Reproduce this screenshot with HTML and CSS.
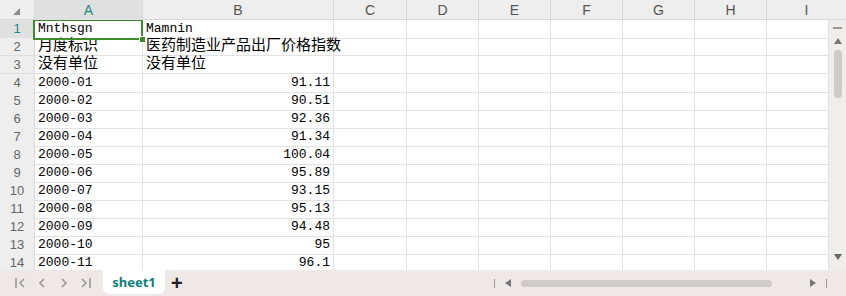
FILE: index.html
```html
<!DOCTYPE html>
<html lang="zh">
<head>
    <meta charset="UTF-8">
    <title>sheet1</title>
    <link rel="stylesheet" href="styles.css">
</head>
<body>
<div class="app">
    <div class="colheads">
        <div class="corner"><span class="corner-tri"></span></div>
        <div class="colhead active">A</div>
        <div class="colhead">B</div>
        <div class="colhead">C</div>
        <div class="colhead">D</div>
        <div class="colhead">E</div>
        <div class="colhead">F</div>
        <div class="colhead">G</div>
        <div class="colhead">H</div>
        <div class="colhead">I</div>
    </div>
    <div class="main">
        <div class="rows">
            <div class="row"><div class="rowhead active">1</div><div class="cell selected">Mnthsgn</div><div class="cell">Mamnin</div><div class="cell"></div><div class="cell"></div><div class="cell"></div><div class="cell"></div><div class="cell"></div><div class="cell"></div><div class="cell"></div></div>
            <div class="row"><div class="rowhead">2</div><div class="cell zh">月度标识</div><div class="cell zh">医药制造业产品出厂价格指数</div><div class="cell"></div><div class="cell"></div><div class="cell"></div><div class="cell"></div><div class="cell"></div><div class="cell"></div><div class="cell"></div></div>
            <div class="row"><div class="rowhead">3</div><div class="cell zh">没有单位</div><div class="cell zh">没有单位</div><div class="cell"></div><div class="cell"></div><div class="cell"></div><div class="cell"></div><div class="cell"></div><div class="cell"></div><div class="cell"></div></div>
            <div class="row"><div class="rowhead">4</div><div class="cell">2000-01</div><div class="cell num">91.11</div><div class="cell"></div><div class="cell"></div><div class="cell"></div><div class="cell"></div><div class="cell"></div><div class="cell"></div><div class="cell"></div></div>
            <div class="row"><div class="rowhead">5</div><div class="cell">2000-02</div><div class="cell num">90.51</div><div class="cell"></div><div class="cell"></div><div class="cell"></div><div class="cell"></div><div class="cell"></div><div class="cell"></div><div class="cell"></div></div>
            <div class="row"><div class="rowhead">6</div><div class="cell">2000-03</div><div class="cell num">92.36</div><div class="cell"></div><div class="cell"></div><div class="cell"></div><div class="cell"></div><div class="cell"></div><div class="cell"></div><div class="cell"></div></div>
            <div class="row"><div class="rowhead">7</div><div class="cell">2000-04</div><div class="cell num">91.34</div><div class="cell"></div><div class="cell"></div><div class="cell"></div><div class="cell"></div><div class="cell"></div><div class="cell"></div><div class="cell"></div></div>
            <div class="row"><div class="rowhead">8</div><div class="cell">2000-05</div><div class="cell num">100.04</div><div class="cell"></div><div class="cell"></div><div class="cell"></div><div class="cell"></div><div class="cell"></div><div class="cell"></div><div class="cell"></div></div>
            <div class="row"><div class="rowhead">9</div><div class="cell">2000-06</div><div class="cell num">95.89</div><div class="cell"></div><div class="cell"></div><div class="cell"></div><div class="cell"></div><div class="cell"></div><div class="cell"></div><div class="cell"></div></div>
            <div class="row"><div class="rowhead">10</div><div class="cell">2000-07</div><div class="cell num">93.15</div><div class="cell"></div><div class="cell"></div><div class="cell"></div><div class="cell"></div><div class="cell"></div><div class="cell"></div><div class="cell"></div></div>
            <div class="row"><div class="rowhead">11</div><div class="cell">2000-08</div><div class="cell num">95.13</div><div class="cell"></div><div class="cell"></div><div class="cell"></div><div class="cell"></div><div class="cell"></div><div class="cell"></div><div class="cell"></div></div>
            <div class="row"><div class="rowhead">12</div><div class="cell">2000-09</div><div class="cell num">94.48</div><div class="cell"></div><div class="cell"></div><div class="cell"></div><div class="cell"></div><div class="cell"></div><div class="cell"></div><div class="cell"></div></div>
            <div class="row"><div class="rowhead">13</div><div class="cell">2000-10</div><div class="cell num">95</div><div class="cell"></div><div class="cell"></div><div class="cell"></div><div class="cell"></div><div class="cell"></div><div class="cell"></div><div class="cell"></div></div>
            <div class="row"><div class="rowhead">14</div><div class="cell">2000-11</div><div class="cell num">96.1</div><div class="cell"></div><div class="cell"></div><div class="cell"></div><div class="cell"></div><div class="cell"></div><div class="cell"></div><div class="cell"></div></div>
        </div>
        <div class="vscroll">
            <div class="vbar-top"></div>
            <svg class="arrow" width="8" height="6" viewBox="0 0 8 6"><path d="M4 0 L8 6 L0 6 Z" fill="#777"/></svg>
            <div class="vthumb"></div>
            <div class="vspace"></div>
            <svg class="arrow" width="8" height="6" viewBox="0 0 8 6"><path d="M0 0 L8 0 L4 6 Z" fill="#666"/></svg>
        </div>
    </div>
    <div class="bottombar">
        <div class="nav">
            <svg width="12" height="12" viewBox="0 0 12 12"><path d="M2 1 V11 M10 2 L6 6 L10 10" stroke="#999" stroke-width="1.6" fill="none"/></svg>
            <svg width="12" height="12" viewBox="0 0 12 12"><path d="M8 2 L4 6 L8 10" stroke="#999" stroke-width="1.6" fill="none"/></svg>
            <svg width="12" height="12" viewBox="0 0 12 12"><path d="M4 2 L8 6 L4 10" stroke="#999" stroke-width="1.6" fill="none"/></svg>
            <svg width="12" height="12" viewBox="0 0 12 12"><path d="M2 2 L6 6 L2 10 M10 1 V11" stroke="#999" stroke-width="1.6" fill="none"/></svg>
        </div>
        <div class="tab">sheet1</div>
        <div class="addtab">+</div>
        <div class="hscroll">
            <span class="tick"></span>
            <svg width="6" height="8" viewBox="0 0 6 8"><path d="M0 4 L6 0 L6 8 Z" fill="#777"/></svg>
            <div class="hthumb"></div>
            <svg width="6" height="8" viewBox="0 0 6 8"><path d="M0 0 L6 4 L0 8 Z" fill="#777"/></svg>
            <span class="tick"></span>
        </div>
    </div>
</div>
</body>
</html>
```

FILE: styles.css
```css
body {
    margin: 0;
    background: #fff;
    font-family: "Liberation Sans", "Noto Sans CJK SC", sans-serif;
}
.app {
    width: 846px;
    height: 296px;
    display: flex;
    flex-direction: column;
    overflow: hidden;
}
.colheads {
    display: grid;
    grid-template-columns: 35px 108px 191px 73px repeat(5, 72px) 1fr;
    height: 20px;
    background: #eeeeee;
    border-bottom: 1px solid #d9d9d9;
    box-sizing: border-box;
}
.corner {
    border-right: 1px solid #d9d9d9;
    position: relative;
}
.corner-tri {
    position: absolute;
    left: 13px;
    top: 8px;
    width: 0;
    height: 0;
    border-left: 7px solid transparent;
    border-bottom: 7px solid #8a8a8a;
}
.colhead {
    border-right: 1px solid #d9d9d9;
    color: #555;
    font-size: 14px;
    line-height: 20px;
    text-align: center;
}
.colhead:last-child {
    border-right: none;
}
.colhead.active {
    background: #e0e0e0;
    color: #1b8a7e;
}
.main {
    display: flex;
    height: 250px;
}
.rows {
    width: 829px;
    overflow: hidden;
}
.row {
    display: grid;
    grid-template-columns: 35px 108px 191px 73px repeat(5, 72px) 1fr;
    height: 18px;
}
.rowhead {
    background: #eeeeee;
    border-right: 1px solid #d9d9d9;
    border-bottom: 1px solid #dedede;
    color: #666;
    font-size: 13px;
    line-height: 17px;
    text-align: center;
}
.rowhead.active {
    background: #e0e0e0;
    color: #1b8a7e;
}
.cell {
    border-right: 1px solid #e2e2e2;
    border-bottom: 1px solid #e2e2e2;
    padding: 0 3px;
    font-family: "Liberation Mono", "Noto Sans CJK SC", monospace;
    font-size: 13px;
    line-height: 18px;
    color: #000;
    white-space: nowrap;
    overflow: visible;
}
.cell.zh {
    font-size: 15px;
    line-height: 17px;
}
.cell.num {
    text-align: right;
}
.cell.selected {
    position: relative;
    z-index: 3;
}
.cell.selected::after {
    content: "";
    position: absolute;
    left: -2px;
    top: -1px;
    right: -1px;
    bottom: -2px;
    border: 2px solid #3d8b2e;
}
.cell.selected::before {
    content: "";
    position: absolute;
    right: -4px;
    bottom: -5px;
    width: 5px;
    height: 5px;
    background: #3d8b2e;
    border: 1px solid #fff;
    z-index: 2;
}
.vscroll {
    width: 17px;
    background: #efeeed;
    display: flex;
    flex-direction: column;
    align-items: center;
}
.vbar-top {
    width: 9px;
    height: 2px;
    background: #999;
    margin-top: 7px;
}
.vscroll .arrow {
    margin-top: 9px;
}
.vthumb {
    width: 8px;
    height: 48px;
    background: #cfcbc9;
    border-radius: 4px;
    margin-top: 6px;
}
.vspace {
    flex: 1;
}
.vscroll .arrow:last-child {
    margin: 0 0 10px;
}
.bottombar {
    height: 26px;
    background: #eee8e6;
    display: flex;
    align-items: flex-start;
}
.nav {
    display: flex;
    gap: 10px;
    padding: 7px 0 0 14px;
    width: 89px;
}
.tab {
    width: 62px;
    height: 24px;
    background: #fff;
    border-radius: 0 0 6px 6px;
    color: #0e7f7c;
    font-family: "Noto Sans", sans-serif;
    font-weight: bold;
    font-size: 13px;
    line-height: 24px;
    text-align: center;
}
.addtab {
    margin-left: 6px;
    font-family: "Liberation Sans", sans-serif;
    font-size: 20px;
    font-weight: bold;
    line-height: 26px;
    color: #222;
}
.hscroll {
    margin-left: auto;
    margin-right: 19px;
    display: flex;
    align-items: center;
    gap: 10px;
    height: 26px;
}
.tick {
    width: 1px;
    height: 9px;
    background: #999;
}
.hthumb {
    width: 251px;
    height: 7px;
    background: #cfcbc9;
    border-radius: 4px;
    margin-right: 28px;
}
```
